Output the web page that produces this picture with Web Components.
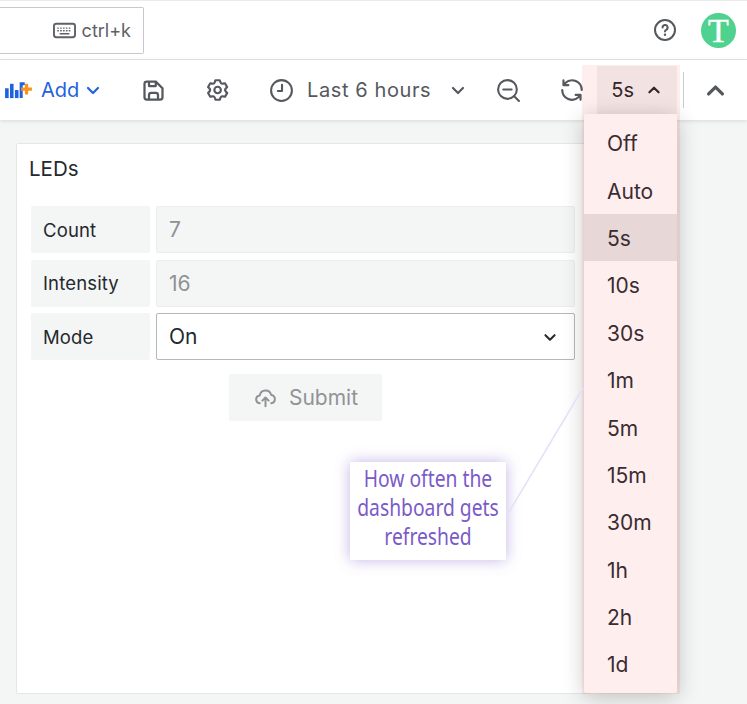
<!DOCTYPE html>
<html>
<head>
<meta charset="utf-8">
<title>LEDs</title>
<style>
  html, body { margin: 0; height: 100%; overflow: hidden; }
  body { background: #f4f5f5; color: #24292e; font-family: Inter, "Noto Sans", sans-serif; }
  page-frame { width: 747px; height: 704px; }
</style>
</head>
<body>
<page-frame>
  <top-bar></top-bar>
  <tool-bar></tool-bar>
  <led-panel title="LEDs">
    <form-row label="Count" value="7"></form-row>
    <form-row label="Intensity" value="16"></form-row>
    <form-row label="Mode" value="On" select></form-row>
  </led-panel>
  <refresh-menu current="5s" options="Off,Auto,5s,10s,30s,1m,5m,15m,30m,1h,2h,1d"></refresh-menu>
  <callout-note>How often the<br>dashboard gets<br>refreshed</callout-note>
</page-frame>

<script>
const ICONS = {
  save: '<path fill="currentColor" d="M20.71,9.29l-6-6a1,1,0,0,0-.32-.21A1.09,1.09,0,0,0,14,3H6A3,3,0,0,0,3,6V18a3,3,0,0,0,3,3H18a3,3,0,0,0,3-3V10A1,1,0,0,0,20.71,9.29ZM9,5h4V7H9Zm6,14H9V16a1,1,0,0,1,1-1h4a1,1,0,0,1,1,1Zm4-1a1,1,0,0,1-1,1H17V16a3,3,0,0,0-3-3H10a3,3,0,0,0-3,3v3H6a1,1,0,0,1-1-1V6A1,1,0,0,1,6,5H7V8A1,1,0,0,0,8,9h6a1,1,0,0,0,1-1V6.41l4,4Z"/>',
  cog: '<path fill="currentColor" d="M19.9,12.66a1,1,0,0,1,0-1.32L21.18,9.9a1,1,0,0,0,.12-1.17l-2-3.46a1,1,0,0,0-1.07-.48l-1.88.38a1,1,0,0,1-1.15-.66l-.61-1.83A1,1,0,0,0,13.64,2h-4a1,1,0,0,0-1,.68L8.08,4.51a1,1,0,0,1-1.15.66L5,4.79A1,1,0,0,0,4,5.27L2,8.73A1,1,0,0,0,2.1,9.9l1.27,1.44a1,1,0,0,1,0,1.32L2.1,14.1A1,1,0,0,0,2,15.27l2,3.46a1,1,0,0,0,1.07.48l1.88-.38a1,1,0,0,1,1.15.66l.61,1.83a1,1,0,0,0,1,.68h4a1,1,0,0,0,.95-.68l.61-1.83a1,1,0,0,1,1.15-.66l1.88.38a1,1,0,0,0,1.07-.48l2-3.46a1,1,0,0,0-.12-1.17ZM18.41,14l.8.9-1.28,2.22-1.18-.24a3,3,0,0,0-3.45,2L12.92,20H10.36L10,18.86a3,3,0,0,0-3.45-2l-1.18.24L4.07,14.89l.8-.9a3,3,0,0,0,0-4l-.8-.9L5.35,6.89l1.18.24a3,3,0,0,0,3.45-2L10.36,4h2.56l.38,1.14a3,3,0,0,0,3.45,2l1.18-.24,1.28,2.22-.8.9A3,3,0,0,0,18.41,14ZM11.64,8a4,4,0,1,0,4,4A4,4,0,0,0,11.64,8Zm0,6a2,2,0,1,1,2-2A2,2,0,0,1,11.64,14Z"/>',
  sync: '<path fill="currentColor" d="M19.91,15.51H15.38a1,1,0,0,0,0,2h2.4A8,8,0,0,1,4,12a1,1,0,0,0-2,0,10,10,0,0,0,16.88,7.23V21a1,1,0,0,0,2,0V16.5A1,1,0,0,0,19.91,15.51ZM12,2A10,10,0,0,0,5.12,4.77V3a1,1,0,0,0-2,0V7.5a1,1,0,0,0,1,1h4.5a1,1,0,0,0,0-2H6.22A8,8,0,0,1,20,12a1,1,0,0,0,2,0A10,10,0,0,0,12,2Z"/>',
  clock: '<g fill="none" stroke="currentColor" stroke-width="2" stroke-linecap="round" stroke-linejoin="round"><circle cx="12" cy="12" r="10"/><path d="M12.5 6.5V12.5H8.5"/></g>',
  zoomOut: '<g fill="none" stroke="currentColor" stroke-width="2" stroke-linecap="round"><circle cx="11" cy="11" r="9"/><path d="M7 11H15M17.5 17.5L22 22"/></g>',
  help: '<g fill="none" stroke="currentColor" stroke-width="2" stroke-linecap="round"><circle cx="12" cy="12" r="10"/><path d="M9.6 9.6a2.5 2.5 0 1 1 3.6 2.2c-.8.4-1.2.9-1.2 1.7"/></g><circle cx="12" cy="16.8" r="1.2" fill="currentColor"/>',
  keyboard: '<g fill="none" stroke="currentColor" stroke-linecap="round"><rect x="1" y="5" width="22" height="14" rx="2.5" stroke-width="2"/><path stroke-width="1.5" stroke-dasharray="0.6 2.4" d="M5 9.5H19.5M5 12.3H19.5"/><path stroke-width="1.5" d="M7.5 15.3H16.5"/></g>',
  chevronDown: '<path fill="none" stroke="currentColor" stroke-width="2.2" stroke-linecap="round" stroke-linejoin="round" d="M7 10L12 15L17 10"/>',
  chevronUp: '<path fill="none" stroke="currentColor" stroke-width="2.4" stroke-linecap="round" stroke-linejoin="round" d="M7 14.5L12 9.5L17 14.5"/>',
  cloudUp: '<g fill="none" stroke="currentColor" stroke-width="1.9" stroke-linecap="round" stroke-linejoin="round"><path d="M6.5 17.5A4 4 0 0 1 3 14a4 4 0 0 1 3.6-4A5.5 5.5 0 0 1 17.4 9.5 4 4 0 0 1 21 14a4 4 0 0 1-3.5 3.5"/><path d="M12 20.5V12.5M9 15L12 12L15 15"/></g>',
  addPanel: '<rect x="0" y="10" width="4" height="11" fill="#1f62e0"/><rect x="5.5" y="5" width="4" height="16" fill="#1f62e0"/><rect x="11" y="12" width="4" height="9" fill="#1f62e0"/><path d="M18 21V5h4" fill="none" stroke="#1f62e0" stroke-width="3.4"/><path d="M24 5v12M18 11h12" stroke="#f7941d" stroke-width="3.6" fill="none"/>'
};

class IconGlyph extends HTMLElement {
  connectedCallback() {
    const size = this.getAttribute('size') || '24';
    const box = this.getAttribute('box') || '0 0 24 24';
    const width = this.getAttribute('width') || size;
    this.attachShadow({ mode: 'open' });
    this.shadowRoot.innerHTML = `
      <style>
        :host { display: inline-flex; flex: none; color: inherit; }
        svg { display: block; }
      </style>
      <svg width="${width}" height="${size}" viewBox="${box}">${ICONS[this.getAttribute('name')] || ''}</svg>`;
  }
}

class PageFrame extends HTMLElement {
  connectedCallback() {
    this.attachShadow({ mode: 'open' });
    this.shadowRoot.innerHTML = `
      <style>
        :host { display: flex; flex-direction: column; position: relative; overflow: hidden; }
      </style>
      <slot></slot>`;
  }
}

class TopBar extends HTMLElement {
  connectedCallback() {
    this.attachShadow({ mode: 'open' });
    this.shadowRoot.innerHTML = `
      <style>
        :host {
          display: flex;
          align-items: center;
          height: 58px;
          background: #fff;
          border-top: 1px solid #e9eaeb;
          border-bottom: 1px solid #e3e4e5;
          color: #5e6167;
          padding-right: 11px;
        }
        .search {
          display: flex;
          align-items: center;
          justify-content: flex-end;
          box-sizing: border-box;
          width: 144px;
          height: 47px;
          padding-right: 12px;
          gap: 6px;
          background: #fff;
          border: 1px solid #c6c8ca;
          border-left: none;
          border-radius: 0 2px 2px 0;
          font-size: 18px;
        }
        .help { margin-left: auto; margin-right: 24px; color: #55595e; }
        .avatar {
          width: 35px;
          height: 35px;
          border-radius: 50%;
          background: #4fd18f;
          color: #fff;
          font: 400 34px/36px "Liberation Serif", serif;
          -webkit-text-stroke: .5px #fff;
          text-align: center;
        }
      </style>
      <div class="search"><icon-glyph name="keyboard" size="23"></icon-glyph><span>ctrl+k</span></div>
      <icon-glyph class="help" name="help" size="24"></icon-glyph>
      <div class="avatar">T</div>`;
  }
}

class ToolBar extends HTMLElement {
  connectedCallback() {
    this.attachShadow({ mode: 'open' });
    this.shadowRoot.innerHTML = `
      <style>
        :host {
          display: flex;
          align-items: center;
          position: relative;
          height: 60px;
          flex: none;
          background: #fff;
          color: #55595e;
          box-shadow: 0 1px 4px rgba(0, 0, 0, .12);
          padding-left: 5px;
          font-size: 20px;
        }
        .add { display: flex; align-items: center; color: #1f62e0; width: 98px; }
        .add span { margin: 0 2px 0 9px; }
        .range { display: flex; align-items: center; letter-spacing: .6px; }
        .range span { margin: 0 15px 0 13px; }
        .refresh {
          display: flex;
          align-items: center;
          box-sizing: border-box;
          height: 48px;
          width: 80px;
          margin-left: 12px;
          padding-left: 14px;
          background: #f3f3f3;
          color: #24292e;
        }
        .refresh span { margin-right: 9px; }
        .divider { width: 1px; height: 36px; background: #c9cbcd; margin: -1px 0 0 6px; }
      </style>
      <div class="add">
        <icon-glyph name="addPanel" size="17" width="27" box="0 3 30 19"></icon-glyph>
        <span>Add</span>
        <icon-glyph name="chevronDown" size="24"></icon-glyph>
      </div>
      <icon-glyph name="save" size="27" style="margin-left:37px"></icon-glyph>
      <icon-glyph name="cog" size="26" style="margin-left:38px"></icon-glyph>
      <div class="range" style="margin-left:38px">
        <icon-glyph name="clock" size="25"></icon-glyph>
        <span>Last 6 hours</span>
        <icon-glyph name="chevronDown" size="24"></icon-glyph>
      </div>
      <icon-glyph name="zoomOut" size="25" style="margin-left:26px"></icon-glyph>
      <icon-glyph name="sync" size="26" style="margin-left:38px"></icon-glyph>
      <div class="refresh"><span>5s</span><icon-glyph name="chevronUp" size="22"></icon-glyph></div>
      <div class="divider"></div>
      <icon-glyph name="chevronUp" size="33" style="margin-left:15px"></icon-glyph>`;
  }
}

class LedPanel extends HTMLElement {
  connectedCallback() {
    this.attachShadow({ mode: 'open' });
    this.shadowRoot.innerHTML = `
      <style>
        :host {
          display: block;
          box-sizing: border-box;
          width: 575px;
          height: 551px;
          margin: 23px 0 0 16px;
          flex: none;
          background: #fff;
          border: 1px solid #e4e7e7;
          border-radius: 2px;
        }
        h2 { margin: 13px 0 0 12px; font: 400 20.5px/24px Inter, sans-serif; color: #24292e; }
        .rows { display: grid; gap: 6.5px; margin: 25px 15px 0 14px; }
        .submit {
          display: flex;
          align-items: center;
          justify-content: center;
          gap: 11px;
          box-sizing: border-box;
          width: 153px;
          height: 47px;
          margin: 14px 0 0 212px;
          background: #f4f5f5;
          border-radius: 2px;
          color: #909396;
          font-size: 21px;
          font-weight: 400;
        }
      </style>
      <h2>${this.getAttribute('title')}</h2>
      <div class="rows"><slot></slot></div>
      <div class="submit"><icon-glyph name="cloudUp" size="25"></icon-glyph><span>Submit</span></div>`;
  }
}

class FormRow extends HTMLElement {
  connectedCallback() {
    const isSelect = this.hasAttribute('select');
    this.attachShadow({ mode: 'open' });
    this.shadowRoot.innerHTML = `
      <style>
        :host { display: grid; grid-template-columns: 119px 1fr; gap: 6px; height: 47px; }
        .label, .field {
          display: flex;
          align-items: center;
          border-radius: 2px;
          box-sizing: border-box;
        }
        .label { background: #f4f5f5; padding-left: 12px; font-size: 18.5px; font-weight: 400; letter-spacing: .15px; color: #24292e; }
        .field {
          padding: 0 13px 0 12px;
          font-size: 21px;
          color: #8e9194;
          background: #f4f5f5;
          border: 1px solid #eceeee;
          justify-content: space-between;
        }
        .field.select { background: #fff; color: #24292e; border-color: #b5b7b9; }
      </style>
      <div class="label">${this.getAttribute('label')}</div>
      <div class="field ${isSelect ? 'select' : ''}">
        <span>${this.getAttribute('value')}</span>
        ${isSelect ? '<icon-glyph name="chevronDown" size="22"></icon-glyph>' : ''}
      </div>`;
  }
}

class RefreshMenu extends HTMLElement {
  connectedCallback() {
    const current = this.getAttribute('current');
    const rows = this.getAttribute('options').split(',').map(option =>
      `<div class="row ${option === current ? 'on' : ''}"><span>${option}</span></div>`).join('');
    this.attachShadow({ mode: 'open' });
    this.shadowRoot.innerHTML = `
      <style>
        :host {
          position: absolute;
          left: 582px;
          top: 65px;
          width: 98px;
          height: 629px;
        }
        .menu {
          position: absolute;
          left: 2px;
          right: 3px;
          top: 49px;
          bottom: 1px;
          box-sizing: border-box;
          padding: 5px 0;
          background: #fff;
          border-radius: 2px;
          box-shadow: 0 4px 22px rgba(0, 0, 0, .22);
        }
        .row {
          display: flex;
          align-items: center;
          height: 47.4px;
          padding-left: 23px;
          font-size: 21px;
          color: #2c3035;
        }
        .row span { padding-top: 2px; }
        .row.on { background: #e7e7e7; }
        .tint {
          position: absolute;
          inset: 0;
          background: rgba(255, 0, 0, .065);
          pointer-events: none;
        }
      </style>
      <div class="menu">${rows}</div>
      <div class="tint"></div>`;
  }
}

class CalloutNote extends HTMLElement {
  connectedCallback() {
    this.attachShadow({ mode: 'open' });
    this.shadowRoot.innerHTML = `
      <style>
        :host { position: absolute; left: 350px; top: 462px; width: 156px; height: 98px; }
        .box {
          box-sizing: border-box;
          height: 100%;
          padding-top: 2px;
          background: #fff;
          box-shadow: 0 0 14px rgba(123, 90, 200, .45);
          color: #7b5ac8;
          text-align: center;
          overflow: hidden;
        }
        .text {
          display: block;
          width: 210px;
          margin-left: -27px;
          font: 400 23.5px/29px "Noto Sans", sans-serif;
          transform: scaleX(.82);
          white-space: nowrap;
        }
        svg { position: absolute; left: 156px; top: -75px; }
      </style>
      <div class="box"><span class="text"><slot></slot></span></div>
      <svg width="78" height="132" viewBox="0 0 78 132">
        <path d="M0 130L77 1" stroke="#e4e0f6" stroke-width="1.5" fill="none"/>
      </svg>`;
  }
}

customElements.define('icon-glyph', IconGlyph);
customElements.define('page-frame', PageFrame);
customElements.define('top-bar', TopBar);
customElements.define('tool-bar', ToolBar);
customElements.define('led-panel', LedPanel);
customElements.define('form-row', FormRow);
customElements.define('refresh-menu', RefreshMenu);
customElements.define('callout-note', CalloutNote);
</script>
</body>
</html>
